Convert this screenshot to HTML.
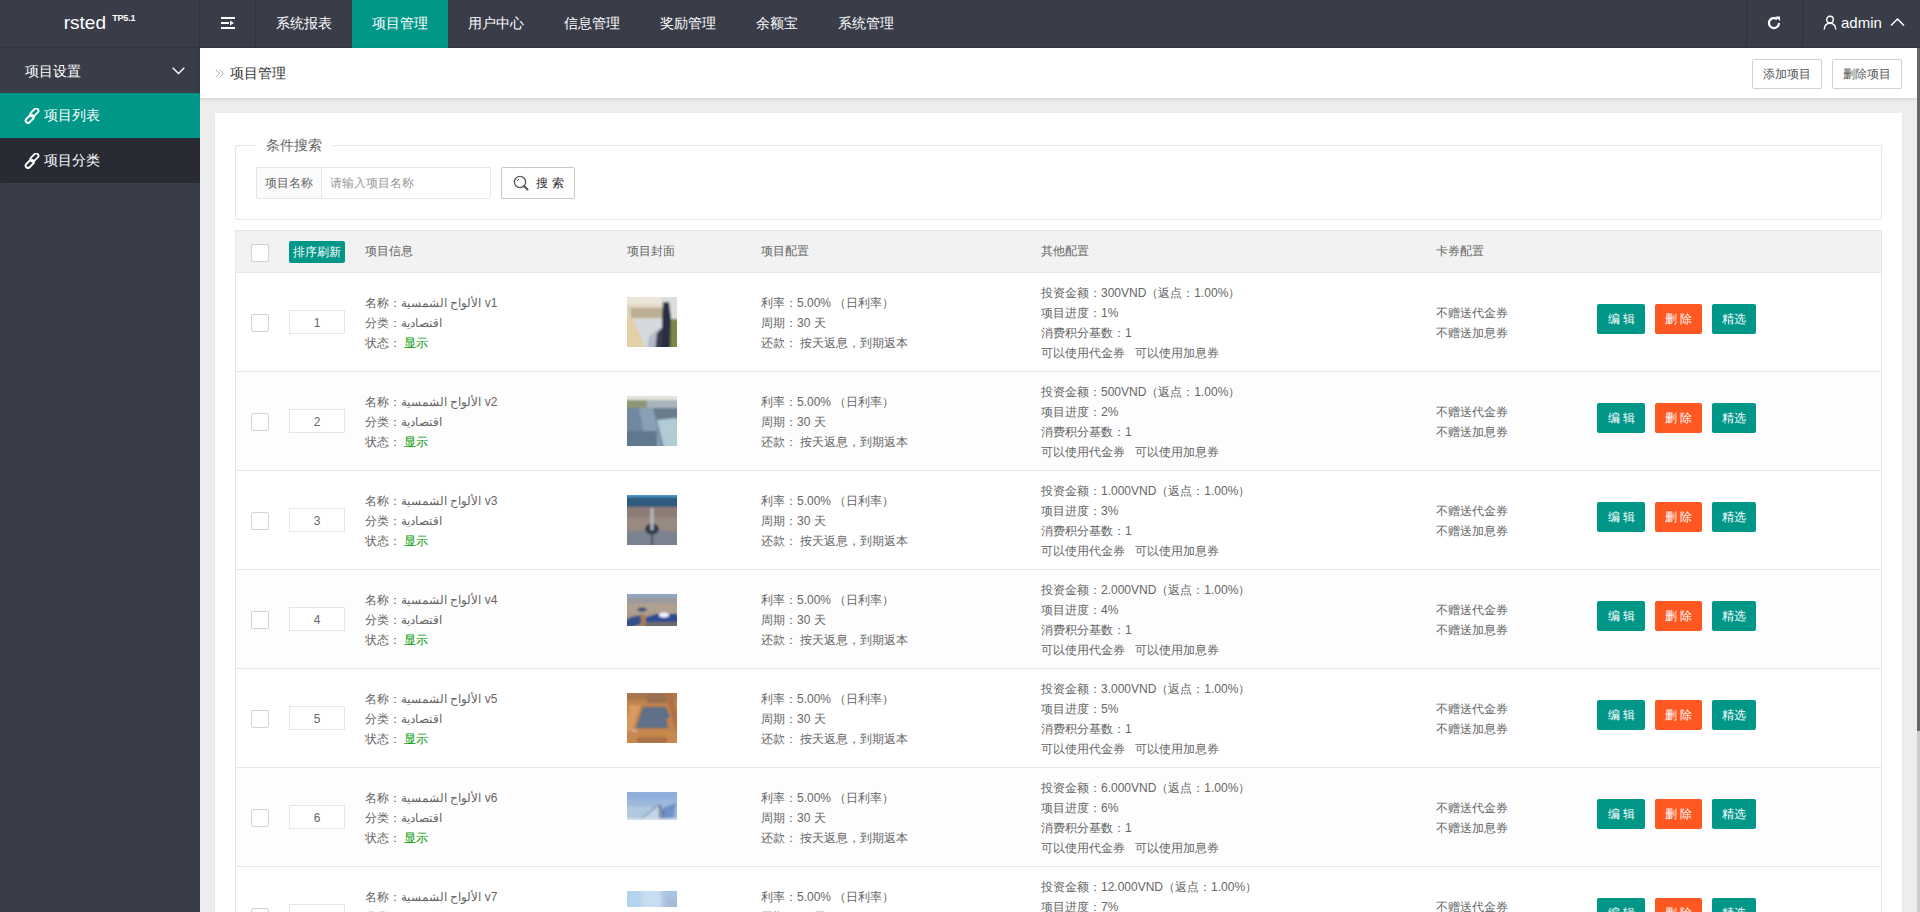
<!DOCTYPE html><html><head><meta charset="utf-8"><title>rsted</title><style>
*{margin:0;padding:0;box-sizing:border-box}
html,body{width:1920px;height:912px;overflow:hidden;background:#ededed;font-family:"Liberation Sans",sans-serif;color:#666}
.abs{position:absolute}
#hdr{position:absolute;left:0;top:0;width:1920px;height:48px;background:#393D49;border-bottom:1px solid #33363f}
.sep{position:absolute;top:0;width:1px;height:47px;background:#30333d}
.nav{position:absolute;top:0;height:47px;line-height:46px;font-size:14px;color:#fff;text-align:center;white-space:nowrap}
.nav.on{background:#009688;height:48px}
#side{position:absolute;left:0;top:48px;width:200px;height:864px;background:#393D49}
#crumb{position:absolute;left:200px;top:48px;width:1717px;height:50px;background:#fff;box-shadow:0 1px 4px rgba(0,0,0,.12)}
.btn-o{position:absolute;height:30px;border:1px solid #d2d2d2;border-radius:2px;background:#fff;color:#555;font-size:12px;line-height:28px;text-align:center}
#card{position:absolute;left:215px;top:113px;width:1687px;height:820px;background:#fff;box-shadow:0 1px 2px rgba(0,0,0,.05)}
#sb{position:absolute;left:1917px;top:48px;width:3px;height:864px;background:#cccccc}
#sbt{position:absolute;left:1917px;top:48px;width:3px;height:683px;background:#666}
.t{position:absolute;font-size:12px;line-height:20px;white-space:nowrap;color:#666}
.hl{position:absolute;height:1px;background:#e6e6e6}
.vl{position:absolute;width:1px;background:#e6e6e6}
.cb{position:absolute;width:18px;height:18px;border:1px solid #d2d2d2;background:#fff;border-radius:2px}
.inp{position:absolute;width:56px;height:24px;border:1px solid #e6e6e6;background:#fff;text-align:center;font-size:12px;line-height:24px;color:#666}
.b{position:absolute;height:30px;top:0;color:#fff;font-size:12px;line-height:30px;text-align:center;border-radius:2px;white-space:nowrap}
.teal{background:#009688}.org{background:#FF5722}
</style></head><body>
<div id="hdr">
<div class="abs" style="left:0;top:0;width:200px;height:47px;line-height:38px;text-align:center;color:#fff;font-size:19px"><span style="position:relative;left:-1px">rsted</span> <sup style="font-size:9px;position:relative;top:-1px;font-weight:bold;letter-spacing:-0.2px">TP5.1</sup></div>
<div class="sep" style="left:199px"></div><div class="sep" style="left:255px"></div>
<svg class="abs" style="left:221px;top:17px" width="14" height="12" viewBox="0 0 14 12"><rect x="0" y="0" width="14" height="2" fill="#fff"/><rect x="0" y="5" width="8" height="2" fill="#fff"/><path d="M9 3.5 L13 6 L9 8.5Z" fill="#fff"/><rect x="0" y="10" width="14" height="2" fill="#fff"/></svg>
<div class="nav" style="left:256px;width:96px">系统报表</div>
<div class="nav on" style="left:352px;width:96px">项目管理</div>
<div class="nav" style="left:448px;width:96px">用户中心</div>
<div class="nav" style="left:544px;width:96px">信息管理</div>
<div class="nav" style="left:640px;width:96px">奖励管理</div>
<div class="nav" style="left:736px;width:82px">余额宝</div>
<div class="nav" style="left:818px;width:96px">系统管理</div>
<div class="sep" style="left:1746px"></div><div class="sep" style="left:1802px"></div>
<svg class="abs" style="left:1766px;top:15px" width="16" height="16" viewBox="0 0 16 16"><path d="M13 8 A5 5 0 1 1 11.2 4.2" stroke="#fff" stroke-width="2.2" fill="none"/><path d="M9.5 1.5 L14 1.5 L14 6 Z" fill="#fff"/></svg>
<svg class="abs" style="left:1823px;top:15px" width="14" height="15" viewBox="0 0 14 15"><circle cx="7" cy="4.5" r="3.3" stroke="#fff" stroke-width="1.4" fill="none"/><path d="M1.2 14.5 C1.5 10 4 8.3 7 8.3 C10 8.3 12.5 10 12.8 14.5" stroke="#fff" stroke-width="1.4" fill="none"/></svg>
<div class="abs" style="left:1841px;top:0;height:47px;line-height:45px;font-size:15px;color:#fff">admin</div>
<svg class="abs" style="left:1890px;top:17px" width="15" height="10" viewBox="0 0 15 10"><path d="M1 8.5 L7.5 2 L14 8.5" stroke="#fff" stroke-width="1.5" fill="none"/></svg>
</div>
<div id="side">
<div class="abs" style="left:25px;top:1px;height:45px;line-height:45px;font-size:14px;color:#fff">项目设置</div>
<svg class="abs" style="left:172px;top:19px" width="13" height="8" viewBox="0 0 13 8"><path d="M0.7 0.7 L6.5 6.5 L12.3 0.7" stroke="#fff" stroke-width="1.4" fill="none"/></svg>
<div class="abs" style="left:0;top:45px;width:200px;height:90px;background:#282B33;border-radius:0 0 2px 2px"></div>
<div class="abs" style="left:0;top:45px;width:200px;height:45px;background:#009688"></div>
<svg class="abs" style="left:24px;top:60px" width="16" height="16" viewBox="0 0 16 16"><g stroke="#fff" stroke-width="1.9" fill="none"><rect x="5.65" y="2.23" width="9.5" height="4.6" rx="2.3" transform="rotate(-45 10.4 4.53)"/><rect x="0.95" y="8.57" width="9.5" height="4.6" rx="2.3" transform="rotate(-45 5.7 10.87)"/></g></svg>
<div class="abs" style="left:44px;top:45px;height:45px;line-height:45px;font-size:14px;color:#fff">项目列表</div>
<svg class="abs" style="left:24px;top:105px" width="16" height="16" viewBox="0 0 16 16"><g stroke="#fff" stroke-width="1.9" fill="none"><rect x="5.65" y="2.23" width="9.5" height="4.6" rx="2.3" transform="rotate(-45 10.4 4.53)"/><rect x="0.95" y="8.57" width="9.5" height="4.6" rx="2.3" transform="rotate(-45 5.7 10.87)"/></g></svg>
<div class="abs" style="left:44px;top:90px;height:45px;line-height:45px;font-size:14px;color:#fff">项目分类</div>
</div>
<div id="crumb">
<svg class="abs" style="left:15px;top:21px" width="10" height="10" viewBox="0 0 10 10"><path d="M0.8 0.8 L4.6 4.6 L0.8 8.4 M4.6 0.8 L8.4 4.6 L4.6 8.4" stroke="#aaa" stroke-width="1" fill="none"/></svg>
<div class="abs" style="left:30px;top:0;height:50px;line-height:50px;font-size:14px;color:#333">项目管理</div>
<div class="btn-o" style="left:1552px;top:11px;width:70px">添加项目</div>
<div class="btn-o" style="left:1632px;top:11px;width:70px">删除项目</div>
</div>
<div id="card"></div>
<div class="abs" style="left:235px;top:145px;width:1647px;height:75px;border:1px solid #e6e6e6;border-radius:2px"></div>
<div class="abs" style="left:256px;top:135px;height:20px;padding:0 10px;background:#fff;font-size:14px;line-height:20px;color:#666">条件搜索</div>
<div class="abs" style="left:256px;top:167px;width:235px;height:32px;border:1px solid #e6e6e6;border-radius:2px;background:#fff"></div>
<div class="abs" style="left:256px;top:167px;width:66px;height:32px;border:1px solid #e6e6e6;border-right:1px solid #e6e6e6;background:#FBFBFB;font-size:12px;line-height:30px;text-align:center;color:#666;border-radius:2px 0 0 2px">项目名称</div>
<div class="abs" style="left:330px;top:167px;height:32px;font-size:12px;line-height:32px;color:#999">请输入项目名称</div>
<div class="abs" style="left:501px;top:167px;width:74px;height:32px;border:1px solid #c9c9c9;border-radius:2px;background:#fff"></div>
<svg class="abs" style="left:513px;top:175px" width="17" height="17" viewBox="0 0 17 17"><circle cx="7" cy="7" r="5.6" stroke="#555" stroke-width="1.3" fill="none"/><path d="M4.2 6 A3 3 0 0 1 6 4.2" stroke="#555" stroke-width="1" fill="none"/><path d="M11 11 L14.5 14.5" stroke="#555" stroke-width="2" stroke-linecap="round"/></svg>
<div class="abs" style="left:536px;top:167px;height:32px;font-size:12px;line-height:32px;color:#333;letter-spacing:4px">搜索</div>
<div class="abs" style="left:235px;top:230px;width:1647px;height:43px;background:#f2f2f2"></div>
<div class="hl" style="left:235px;top:230px;width:1647px"></div>
<div class="vl" style="left:235px;top:230px;height:700px"></div>
<div class="vl" style="left:1881px;top:230px;height:700px"></div>
<div class="cb" style="left:251px;top:244px"></div>
<div class="abs" style="left:289px;top:241px;width:56px;height:22px;background:#009688;color:#fff;font-size:12px;line-height:22px;text-align:center;border-radius:2px">排序刷新</div>
<div class="t" style="left:365px;top:241px">项目信息</div>
<div class="t" style="left:627px;top:241px">项目封面</div>
<div class="t" style="left:761px;top:241px">项目配置</div>
<div class="t" style="left:1041px;top:241px">其他配置</div>
<div class="t" style="left:1436px;top:241px">卡券配置</div>
<div class="hl" style="left:235px;top:272px;width:1647px"></div>
<div class="cb" style="left:251px;top:314px"></div>
<div class="inp" style="left:289px;top:310px">1</div>
<div class="t" style="left:365px;top:293px">名称：<span dir="ltr">الألواح الشمسية v1</span></div>
<div class="t" style="left:365px;top:313px">分类：اقتصادية</div>
<div class="t" style="left:365px;top:333px">状态：&nbsp;<span style="color:#009900">显示</span></div>
<svg class="abs" style="left:627px;top:297px" width="50" height="50" viewBox="0 0 50 50"><defs><filter id="f0" x="-20%" y="-20%" width="140%" height="140%"><feGaussianBlur stdDeviation="1.2"/></filter></defs><rect width="50" height="50" fill="#ddd2bc"/><g filter="url(#f0)"><rect x="-5" y="-5" width="60" height="13" fill="#ebe5d8"/><rect x="34" y="-5" width="21" height="28" fill="#dcdedc"/><rect x="4" y="11" width="34" height="10" fill="#bcae92"/><polygon points="4,22 36,21 34,50 20,55" fill="#d6d9de"/><polygon points="22,40 34,30 34,55 20,55" fill="#b4bac4"/><polygon points="-5,16 6,22 20,55 -5,55" fill="#e2d0a6"/><rect x="42" y="22" width="13" height="33" fill="#7c8a4a"/><polygon points="30,36 36,30 36,55 28,55" fill="#3a3c50"/><polygon points="36,5 42,5 44,20 43,55 35,55 35,20" fill="#2a2e42"/></g></svg>
<div class="t" style="left:761px;top:293px">利率：5.00% （日利率）</div>
<div class="t" style="left:761px;top:313px">周期：30 天</div>
<div class="t" style="left:761px;top:333px">还款：&nbsp;按天返息，到期返本</div>
<div class="t" style="left:1041px;top:283px">投资金额：300VND（返点：1.00%）</div>
<div class="t" style="left:1041px;top:303px">项目进度：1%</div>
<div class="t" style="left:1041px;top:323px">消费积分基数：1</div>
<div class="t" style="left:1041px;top:343px">可以使用代金券&nbsp;&nbsp;&nbsp;可以使用加息券</div>
<div class="t" style="left:1436px;top:303px">不赠送代金券</div>
<div class="t" style="left:1436px;top:323px">不赠送加息券</div>
<div class="b teal" style="left:1597px;top:304px;width:48px;letter-spacing:3px;text-indent:3px">编辑</div>
<div class="b org" style="left:1655px;top:304px;width:47px;letter-spacing:3px;text-indent:3px">删除</div>
<div class="b teal" style="left:1712px;top:304px;width:44px">精选</div>
<div class="hl" style="left:235px;top:371px;width:1647px"></div>
<div class="abs" style="left:236px;top:372px;width:1645px;height:98px;background:#fdfdfd"></div>
<div class="cb" style="left:251px;top:413px"></div>
<div class="inp" style="left:289px;top:409px">2</div>
<div class="t" style="left:365px;top:392px">名称：<span dir="ltr">الألواح الشمسية v2</span></div>
<div class="t" style="left:365px;top:412px">分类：اقتصادية</div>
<div class="t" style="left:365px;top:432px">状态：&nbsp;<span style="color:#009900">显示</span></div>
<svg class="abs" style="left:627px;top:396px" width="50" height="50" viewBox="0 0 50 50"><defs><filter id="f1" x="-20%" y="-20%" width="140%" height="140%"><feGaussianBlur stdDeviation="1.1"/></filter></defs><rect width="50" height="50" fill="#7890a4"/><g filter="url(#f1)"><rect x="-5" y="-5" width="60" height="9" fill="#e2e4dc"/><rect x="-5" y="4" width="25" height="8" fill="#8f9674"/><rect x="20" y="4" width="35" height="8" fill="#a8b4bc"/><rect x="-5" y="12" width="30" height="45" fill="#7088a0"/><polygon points="25,12 55,12 55,20 45,24 30,24" fill="#6a7c8c"/><polygon points="30,24 50,22 55,55 38,55" fill="#b2ccd6"/><polygon points="12,12 26,12 34,55 20,55" fill="#8aa0b4"/><rect x="-5" y="35" width="35" height="20" fill="#60788e"/></g></svg>
<div class="t" style="left:761px;top:392px">利率：5.00% （日利率）</div>
<div class="t" style="left:761px;top:412px">周期：30 天</div>
<div class="t" style="left:761px;top:432px">还款：&nbsp;按天返息，到期返本</div>
<div class="t" style="left:1041px;top:382px">投资金额：500VND（返点：1.00%）</div>
<div class="t" style="left:1041px;top:402px">项目进度：2%</div>
<div class="t" style="left:1041px;top:422px">消费积分基数：1</div>
<div class="t" style="left:1041px;top:442px">可以使用代金券&nbsp;&nbsp;&nbsp;可以使用加息券</div>
<div class="t" style="left:1436px;top:402px">不赠送代金券</div>
<div class="t" style="left:1436px;top:422px">不赠送加息券</div>
<div class="b teal" style="left:1597px;top:403px;width:48px;letter-spacing:3px;text-indent:3px">编辑</div>
<div class="b org" style="left:1655px;top:403px;width:47px;letter-spacing:3px;text-indent:3px">删除</div>
<div class="b teal" style="left:1712px;top:403px;width:44px">精选</div>
<div class="hl" style="left:235px;top:470px;width:1647px"></div>
<div class="cb" style="left:251px;top:512px"></div>
<div class="inp" style="left:289px;top:508px">3</div>
<div class="t" style="left:365px;top:491px">名称：<span dir="ltr">الألواح الشمسية v3</span></div>
<div class="t" style="left:365px;top:511px">分类：اقتصادية</div>
<div class="t" style="left:365px;top:531px">状态：&nbsp;<span style="color:#009900">显示</span></div>
<svg class="abs" style="left:627px;top:495px" width="50" height="50" viewBox="0 0 50 50"><defs><filter id="f2" x="-20%" y="-20%" width="140%" height="140%"><feGaussianBlur stdDeviation="1.0"/></filter></defs><rect width="50" height="50" fill="#857d7c"/><g filter="url(#f2)"><rect x="-5" y="-5" width="60" height="7" fill="#4c9ad0"/><rect x="-5" y="2" width="60" height="10" fill="#2e5a7c"/><rect x="-5" y="12" width="60" height="10" fill="#8c7c74"/><rect x="-5" y="22" width="60" height="14" fill="#988a80"/><rect x="-5" y="36" width="60" height="20" fill="#7a8290"/><ellipse cx="25" cy="34" rx="7" ry="5.5" fill="#2a3a4e"/><rect x="23.5" y="13" width="3" height="22" fill="#b8bcc4"/><rect x="24.5" y="35" width="1.5" height="16" fill="#303848"/></g></svg>
<div class="t" style="left:761px;top:491px">利率：5.00% （日利率）</div>
<div class="t" style="left:761px;top:511px">周期：30 天</div>
<div class="t" style="left:761px;top:531px">还款：&nbsp;按天返息，到期返本</div>
<div class="t" style="left:1041px;top:481px">投资金额：1.000VND（返点：1.00%）</div>
<div class="t" style="left:1041px;top:501px">项目进度：3%</div>
<div class="t" style="left:1041px;top:521px">消费积分基数：1</div>
<div class="t" style="left:1041px;top:541px">可以使用代金券&nbsp;&nbsp;&nbsp;可以使用加息券</div>
<div class="t" style="left:1436px;top:501px">不赠送代金券</div>
<div class="t" style="left:1436px;top:521px">不赠送加息券</div>
<div class="b teal" style="left:1597px;top:502px;width:48px;letter-spacing:3px;text-indent:3px">编辑</div>
<div class="b org" style="left:1655px;top:502px;width:47px;letter-spacing:3px;text-indent:3px">删除</div>
<div class="b teal" style="left:1712px;top:502px;width:44px">精选</div>
<div class="hl" style="left:235px;top:569px;width:1647px"></div>
<div class="abs" style="left:236px;top:570px;width:1645px;height:98px;background:#fdfdfd"></div>
<div class="cb" style="left:251px;top:611px"></div>
<div class="inp" style="left:289px;top:607px">4</div>
<div class="t" style="left:365px;top:590px">名称：<span dir="ltr">الألواح الشمسية v4</span></div>
<div class="t" style="left:365px;top:610px">分类：اقتصادية</div>
<div class="t" style="left:365px;top:630px">状态：&nbsp;<span style="color:#009900">显示</span></div>
<svg class="abs" style="left:627px;top:594px" width="50" height="32" viewBox="0 0 50 32"><defs><filter id="f3" x="-20%" y="-20%" width="140%" height="140%"><feGaussianBlur stdDeviation="1.0"/></filter></defs><rect width="50" height="32" fill="#a89888"/><g filter="url(#f3)"><rect x="-5" y="-5" width="60" height="8" fill="#8ea8c8"/><rect x="-5" y="3" width="60" height="6" fill="#9a9aa0"/><rect x="-5" y="9" width="60" height="10" fill="#b0a090"/><ellipse cx="15" cy="15.5" rx="4.5" ry="2" fill="#344a80"/><polygon points="-5,28 5,23 16,21 14,30 -5,36" fill="#33508a"/><polygon points="18,24 30,20 50,20 55,30 20,30" fill="#2c4c92"/><ellipse cx="37" cy="21" rx="5" ry="2.5" fill="#f0f4ff"/><rect x="14" y="21" width="4" height="15" fill="#b07850"/><rect x="18" y="28" width="40" height="8" fill="#6e6a6c"/></g></svg>
<div class="t" style="left:761px;top:590px">利率：5.00% （日利率）</div>
<div class="t" style="left:761px;top:610px">周期：30 天</div>
<div class="t" style="left:761px;top:630px">还款：&nbsp;按天返息，到期返本</div>
<div class="t" style="left:1041px;top:580px">投资金额：2.000VND（返点：1.00%）</div>
<div class="t" style="left:1041px;top:600px">项目进度：4%</div>
<div class="t" style="left:1041px;top:620px">消费积分基数：1</div>
<div class="t" style="left:1041px;top:640px">可以使用代金券&nbsp;&nbsp;&nbsp;可以使用加息券</div>
<div class="t" style="left:1436px;top:600px">不赠送代金券</div>
<div class="t" style="left:1436px;top:620px">不赠送加息券</div>
<div class="b teal" style="left:1597px;top:601px;width:48px;letter-spacing:3px;text-indent:3px">编辑</div>
<div class="b org" style="left:1655px;top:601px;width:47px;letter-spacing:3px;text-indent:3px">删除</div>
<div class="b teal" style="left:1712px;top:601px;width:44px">精选</div>
<div class="hl" style="left:235px;top:668px;width:1647px"></div>
<div class="cb" style="left:251px;top:710px"></div>
<div class="inp" style="left:289px;top:706px">5</div>
<div class="t" style="left:365px;top:689px">名称：<span dir="ltr">الألواح الشمسية v5</span></div>
<div class="t" style="left:365px;top:709px">分类：اقتصادية</div>
<div class="t" style="left:365px;top:729px">状态：&nbsp;<span style="color:#009900">显示</span></div>
<svg class="abs" style="left:627px;top:693px" width="50" height="50" viewBox="0 0 50 50"><defs><filter id="f4" x="-20%" y="-20%" width="140%" height="140%"><feGaussianBlur stdDeviation="1.1"/></filter></defs><rect width="50" height="50" fill="#c2824c"/><g filter="url(#f4)"><rect x="-5" y="-5" width="60" height="12" fill="#a87650"/><rect x="20" y="0" width="20" height="10" fill="#9a7052"/><polygon points="2,12 14,12 4,40 -5,40" fill="#d89a62"/><polygon points="-5,20 2,14 -5,50" fill="#b87848"/><polygon points="38,0 44,0 50,20 50,40" fill="#b06e44"/><polygon points="16,14 39,14 43,24 39,26 41,35 9,35" fill="#5f6f88"/><rect x="5" y="37" width="5" height="4" fill="#dde0e8"/><rect x="-5" y="38" width="60" height="17" fill="#c8884e"/><rect x="10" y="44" width="30" height="6" fill="#a87048"/></g></svg>
<div class="t" style="left:761px;top:689px">利率：5.00% （日利率）</div>
<div class="t" style="left:761px;top:709px">周期：30 天</div>
<div class="t" style="left:761px;top:729px">还款：&nbsp;按天返息，到期返本</div>
<div class="t" style="left:1041px;top:679px">投资金额：3.000VND（返点：1.00%）</div>
<div class="t" style="left:1041px;top:699px">项目进度：5%</div>
<div class="t" style="left:1041px;top:719px">消费积分基数：1</div>
<div class="t" style="left:1041px;top:739px">可以使用代金券&nbsp;&nbsp;&nbsp;可以使用加息券</div>
<div class="t" style="left:1436px;top:699px">不赠送代金券</div>
<div class="t" style="left:1436px;top:719px">不赠送加息券</div>
<div class="b teal" style="left:1597px;top:700px;width:48px;letter-spacing:3px;text-indent:3px">编辑</div>
<div class="b org" style="left:1655px;top:700px;width:47px;letter-spacing:3px;text-indent:3px">删除</div>
<div class="b teal" style="left:1712px;top:700px;width:44px">精选</div>
<div class="hl" style="left:235px;top:767px;width:1647px"></div>
<div class="abs" style="left:236px;top:768px;width:1645px;height:98px;background:#fdfdfd"></div>
<div class="cb" style="left:251px;top:809px"></div>
<div class="inp" style="left:289px;top:805px">6</div>
<div class="t" style="left:365px;top:788px">名称：<span dir="ltr">الألواح الشمسية v6</span></div>
<div class="t" style="left:365px;top:808px">分类：اقتصادية</div>
<div class="t" style="left:365px;top:828px">状态：&nbsp;<span style="color:#009900">显示</span></div>
<svg class="abs" style="left:627px;top:792px" width="50" height="28" viewBox="0 0 50 28"><defs><filter id="f5" x="-20%" y="-20%" width="140%" height="140%"><feGaussianBlur stdDeviation="0.8"/></filter></defs><rect width="50" height="28" fill="#9ab8dc"/><g filter="url(#f5)"><rect x="-5" y="-5" width="60" height="12" fill="#90b0dc"/><rect x="-5" y="14" width="30" height="14" fill="#b0c8e0"/><polygon points="36,16 49,11 46,26 36,27" fill="#7090c8"/><polygon points="14,27 32,13 34,27" fill="#c4d4e8"/><path d="M14 27 L32 13 L37 21" stroke="#4a5060" stroke-width="0.8" fill="none"/><rect x="32" y="13" width="1.2" height="14" fill="#404858"/><rect x="35" y="19" width="1" height="8" fill="#404858"/><rect x="-5" y="26.5" width="60" height="3" fill="#dfe6f0"/></g></svg>
<div class="t" style="left:761px;top:788px">利率：5.00% （日利率）</div>
<div class="t" style="left:761px;top:808px">周期：30 天</div>
<div class="t" style="left:761px;top:828px">还款：&nbsp;按天返息，到期返本</div>
<div class="t" style="left:1041px;top:778px">投资金额：6.000VND（返点：1.00%）</div>
<div class="t" style="left:1041px;top:798px">项目进度：6%</div>
<div class="t" style="left:1041px;top:818px">消费积分基数：1</div>
<div class="t" style="left:1041px;top:838px">可以使用代金券&nbsp;&nbsp;&nbsp;可以使用加息券</div>
<div class="t" style="left:1436px;top:798px">不赠送代金券</div>
<div class="t" style="left:1436px;top:818px">不赠送加息券</div>
<div class="b teal" style="left:1597px;top:799px;width:48px;letter-spacing:3px;text-indent:3px">编辑</div>
<div class="b org" style="left:1655px;top:799px;width:47px;letter-spacing:3px;text-indent:3px">删除</div>
<div class="b teal" style="left:1712px;top:799px;width:44px">精选</div>
<div class="hl" style="left:235px;top:866px;width:1647px"></div>
<div class="cb" style="left:251px;top:908px"></div>
<div class="inp" style="left:289px;top:904px">7</div>
<div class="t" style="left:365px;top:887px">名称：<span dir="ltr">الألواح الشمسية v7</span></div>
<div class="t" style="left:365px;top:907px">分类：اقتصادية</div>
<div class="t" style="left:365px;top:927px">状态：&nbsp;<span style="color:#009900">显示</span></div>
<svg class="abs" style="left:627px;top:891px" width="50" height="16" viewBox="0 0 50 16"><defs><filter id="f6" x="-20%" y="-20%" width="140%" height="140%"><feGaussianBlur stdDeviation="2.0"/></filter></defs><rect width="50" height="16" fill="#bcd8f0"/><g filter="url(#f6)"><rect x="-5" y="-5" width="20" height="26" fill="#b4d4ee"/><rect x="15" y="-5" width="20" height="26" fill="#c8ddf0"/><rect x="35" y="-5" width="20" height="26" fill="#a8c4e4"/><rect x="40" y="8" width="15" height="10" fill="#a8b8d4"/></g></svg>
<div class="t" style="left:761px;top:887px">利率：5.00% （日利率）</div>
<div class="t" style="left:761px;top:907px">周期：30 天</div>
<div class="t" style="left:761px;top:927px">还款：&nbsp;按天返息，到期返本</div>
<div class="t" style="left:1041px;top:877px">投资金额：12.000VND（返点：1.00%）</div>
<div class="t" style="left:1041px;top:897px">项目进度：7%</div>
<div class="t" style="left:1041px;top:917px">消费积分基数：1</div>
<div class="t" style="left:1041px;top:937px">可以使用代金券&nbsp;&nbsp;&nbsp;可以使用加息券</div>
<div class="t" style="left:1436px;top:897px">不赠送代金券</div>
<div class="t" style="left:1436px;top:917px">不赠送加息券</div>
<div class="b teal" style="left:1597px;top:898px;width:48px;letter-spacing:3px;text-indent:3px">编辑</div>
<div class="b org" style="left:1655px;top:898px;width:47px;letter-spacing:3px;text-indent:3px">删除</div>
<div class="b teal" style="left:1712px;top:898px;width:44px">精选</div>
<div class="hl" style="left:235px;top:965px;width:1647px"></div>
<div id="sb"></div><div id="sbt"></div>
</body></html>
